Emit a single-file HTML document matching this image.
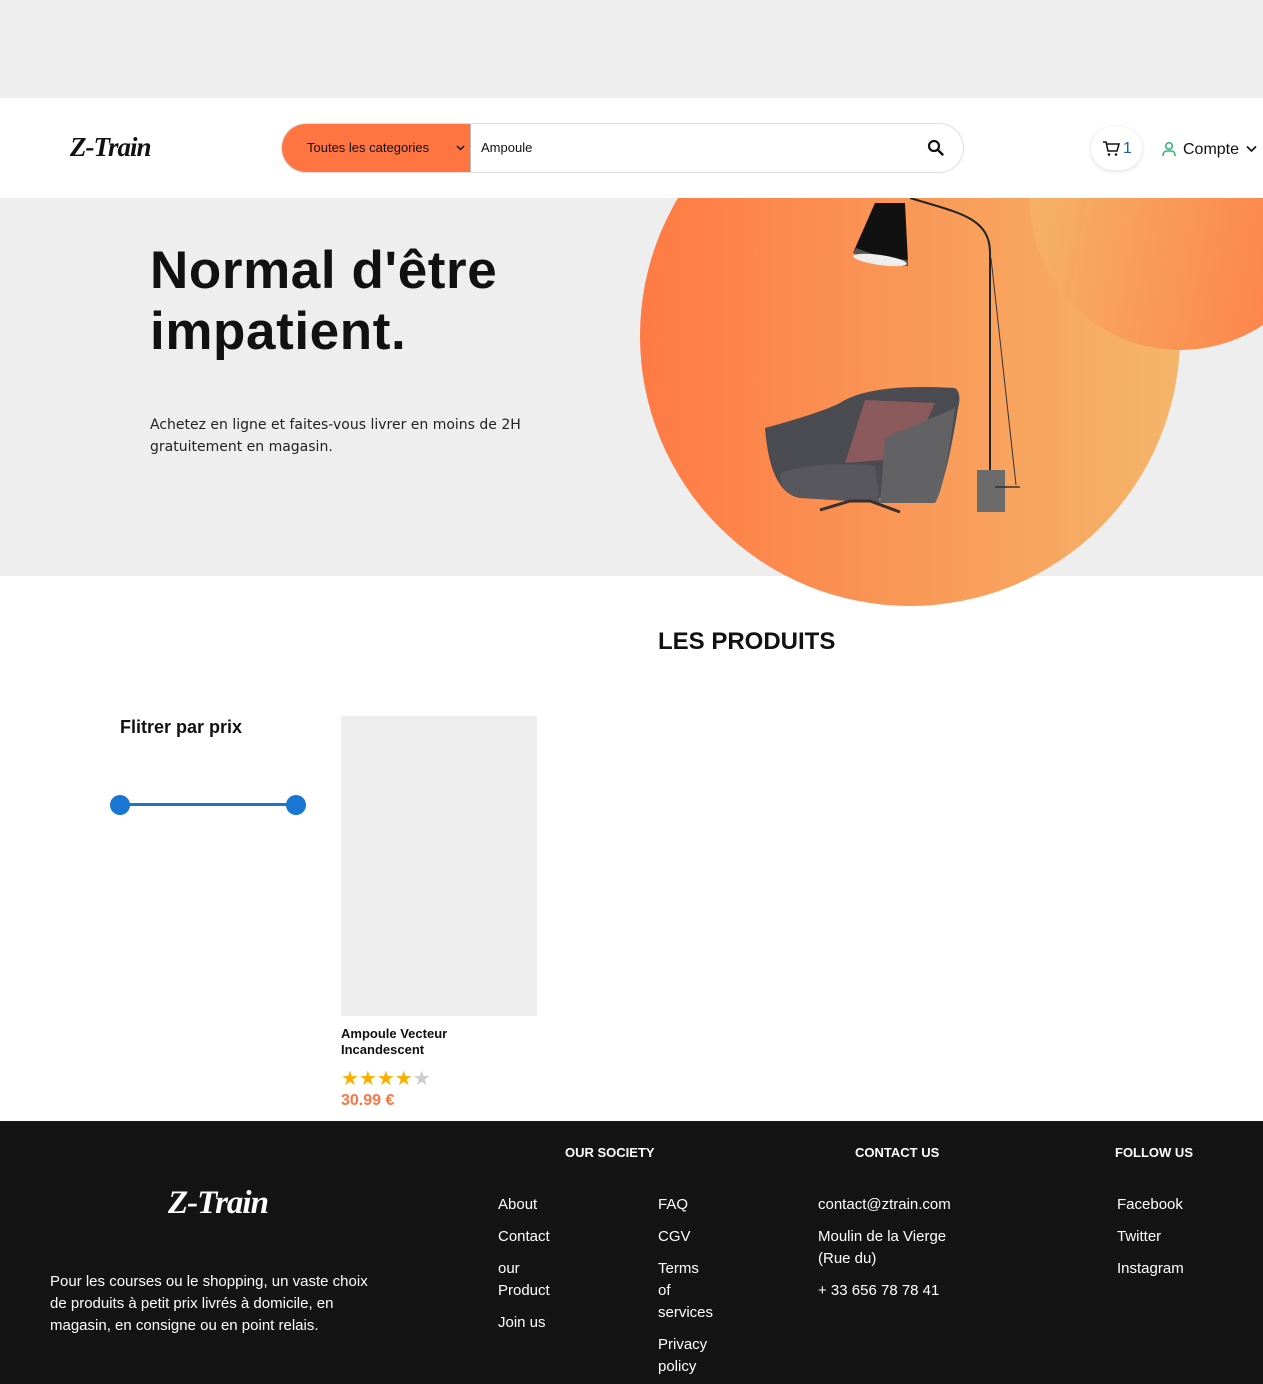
<!DOCTYPE html>
<html><head><meta charset="utf-8"><style>
*{margin:0;padding:0;box-sizing:border-box}
body{width:1263px;height:1384px;background:#fff;font-family:"Liberation Sans",sans-serif;position:relative;overflow:hidden}
.abs{position:absolute}
.logo{font-family:"Liberation Serif",serif;font-style:italic;font-weight:bold;letter-spacing:-1px}
</style></head><body>
<div class="abs" style="left:0;top:0;width:1263px;height:98px;background:#eeeeee"></div>
<!-- header -->
<div class="abs logo" style="left:70px;top:132px;font-size:27px;color:#111">Z-Train</div>
<div class="abs" style="left:281px;top:123px;width:683px;height:50px;border:1px solid #ddd;border-radius:25px;overflow:hidden;background:#fff">
 <div class="abs" style="left:0;top:0;width:189px;height:48px;background:#ff7542;border-right:1px solid #bbb"></div>
 <div class="abs" style="left:25px;top:16px;font-size:13px;color:#111">Toutes les categories</div>
 <svg class="abs" style="left:174px;top:21px" width="9" height="6" viewBox="0 0 9 6"><path d="M1 1l3.5 3.5L8 1" fill="none" stroke="#111" stroke-width="1.5"/></svg>
 <div class="abs" style="left:199px;top:16px;font-size:13px;color:#111">Ampoule</div>
 <svg class="abs" style="left:645px;top:15px" width="17" height="17" viewBox="0 0 17 17"><circle cx="7" cy="7" r="5" fill="none" stroke="#111" stroke-width="2.2"/><path d="M11 11l4.5 4.5" stroke="#111" stroke-width="2.4" stroke-linecap="round"/></svg>
</div>
<div class="abs" style="left:1091px;top:127px;width:51px;height:43px;border-radius:22px;background:#fff;box-shadow:0 1px 5px rgba(0,0,0,.15)"></div>
<svg class="abs" style="left:1102px;top:140px" width="18" height="17" viewBox="0 0 18 17"><path d="M1 2h3l2 9h9l2-7H5" fill="none" stroke="#111" stroke-width="1.5"/><circle cx="7" cy="14.5" r="1.3" fill="#111"/><circle cx="14" cy="14.5" r="1.3" fill="#111"/></svg>
<div class="abs" style="left:1123px;top:140px;font-size:16px;color:#1a5fa8">1</div>
<svg class="abs" style="left:1162px;top:141px" width="14" height="16" viewBox="0 0 14 16"><circle cx="7" cy="5" r="3.3" fill="none" stroke="#2bb673" stroke-width="1.5"/><path d="M1 15v-1.5a4 4 0 0 1 4-3.5h4a4 4 0 0 1 4 3.5V15" fill="none" stroke="#2bb673" stroke-width="1.5"/></svg>
<div class="abs" style="left:1183px;top:141px;font-size:16px;color:#111">Compte</div>
<svg class="abs" style="left:1246px;top:145px" width="11" height="8" viewBox="0 0 11 8"><path d="M1 1.5l4.5 4.5L10 1.5" fill="none" stroke="#111" stroke-width="1.6"/></svg>
<!-- hero -->
<div class="abs" style="left:0;top:198px;width:1263px;height:378px;background:#eeeeee"></div>
<div class="abs" style="left:0;top:198px;width:1263px;height:420px;overflow:hidden">
 <div class="abs" style="left:640px;top:-132px;width:540px;height:540px;border-radius:50%;background:linear-gradient(90deg,#ff7a45,#f4b66a)"></div>
 <div class="abs" style="left:1030px;top:-148px;width:300px;height:300px;border-radius:50%;background:linear-gradient(100deg,#f4b66a,#ff7a45)"></div>
</div>
<svg class="abs" style="left:740px;top:198px" width="300" height="320" viewBox="0 0 300 320">
 <path d="M170 0 C220 15 250 20 250 55 L250 275" fill="none" stroke="#222" stroke-width="2"/>
 <path d="M251 60 L276 287" stroke="#333" stroke-width="1"/>
 <path d="M135 5 L165 5 L168 65 Q140 60 113 55Z" fill="#111"/>
 <path d="M113 55 Q140 68 168 68 L168 62 Q140 60 116 50Z" fill="#555"/>
 <ellipse cx="140" cy="62" rx="27" ry="5" fill="#eee" transform="rotate(8 140 62)"/>
 <rect x="237" y="272" width="28" height="42" fill="#6b6b6b"/>
 <path d="M255 289h25" stroke="#333" stroke-width="1.5"/>
 <path d="M25 230 Q80 215 100 205 Q130 185 215 190 Q222 195 218 210 Q205 290 195 300 L60 300 Q30 295 25 230Z" fill="#4b4b52"/>
 <path d="M125 202 L195 205 L170 260 L105 265Z" fill="#8a5a5c"/>
 <path d="M145 240 Q180 225 215 210 Q205 290 195 305 L140 305Z" fill="#626264"/>
 <path d="M40 275 Q80 262 135 268 L140 305 L60 300 Q40 295 40 275Z" fill="#57575d"/>
 <path d="M80 312 L110 303 L130 303 L160 314" stroke="#3a302c" stroke-width="3" fill="none"/>
</svg>
<div class="abs" style="left:150px;top:240px;font-size:53px;font-weight:bold;line-height:61px;color:#111;letter-spacing:0.6px">Normal d'être<br>impatient.</div>
<div class="abs" style="left:150px;top:414px;line-height:22px;color:#222;font-family:'DejaVu Sans',sans-serif;font-size:14px">Achetez en ligne et faites-vous livrer en moins de 2H<br>gratuitement en magasin.</div>
<!-- products -->
<div class="abs" style="left:658px;top:628px;font-size:24px;font-weight:bold;color:#111">LES PRODUITS</div>
<div class="abs" style="left:120px;top:717px;font-size:18px;font-weight:bold;color:#111">Flitrer par prix</div>
<div class="abs" style="left:120px;top:803px;width:176px;height:3px;background:#1976d2"></div>
<div class="abs" style="left:110px;top:795px;width:20px;height:20px;border-radius:50%;background:#1976d2"></div>
<div class="abs" style="left:286px;top:795px;width:20px;height:20px;border-radius:50%;background:#1976d2"></div>
<div class="abs" style="left:341px;top:716px;width:196px;height:300px;background:#eeeeee"></div>
<div class="abs" style="left:341px;top:1026px;font-size:13px;font-weight:bold;line-height:16px;color:#111">Ampoule Vecteur<br>Incandescent</div>
<div class="abs" style="left:341px;top:1066px;font-size:20px;color:#faaf00;letter-spacing:0px">★★★★<span style="color:#ccc">★</span></div>
<div class="abs" style="left:341px;top:1092px;font-size:16px;font-weight:bold;color:#ff7542">30.99 €</div>
<!-- footer -->
<div class="abs" style="left:0;top:1121px;width:1263px;height:263px;background:#141414;color:#fff;font-size:15px">
 <div class="abs logo" style="left:168px;top:64px;font-size:33px">Z-Train</div>
 <div class="abs" style="left:50px;top:150px;line-height:22px">Pour les courses ou le shopping, un vaste choix<br>de produits à petit prix livrés à domicile, en<br>magasin, en consigne ou en point relais.</div>
 <div class="abs" style="left:565px;top:24px;font-size:13px;font-weight:bold">OUR SOCIETY</div>
 <div class="abs" style="left:855px;top:24px;font-size:13px;font-weight:bold">CONTACT US</div>
 <div class="abs" style="left:1115px;top:24px;font-size:13px;font-weight:bold">FOLLOW US</div>
 <div class="abs" style="left:498px;top:73px;line-height:22px">About<br><div style="height:10px"></div>Contact<br><div style="height:10px"></div>our<br>Product<br><div style="height:10px"></div>Join us</div>
 <div class="abs" style="left:658px;top:73px;line-height:22px">FAQ<br><div style="height:10px"></div>CGV<br><div style="height:10px"></div>Terms<br>of<br>services<br><div style="height:10px"></div>Privacy<br>policy</div>
 <div class="abs" style="left:818px;top:73px;line-height:22px">contact@ztrain.com<br><div style="height:10px"></div>Moulin de la Vierge<br>(Rue du)<br><div style="height:10px"></div>+ 33 656 78 78 41</div>
 <div class="abs" style="left:1117px;top:73px;line-height:22px">Facebook<br><div style="height:10px"></div>Twitter<br><div style="height:10px"></div>Instagram</div>
</div>
</body></html>
